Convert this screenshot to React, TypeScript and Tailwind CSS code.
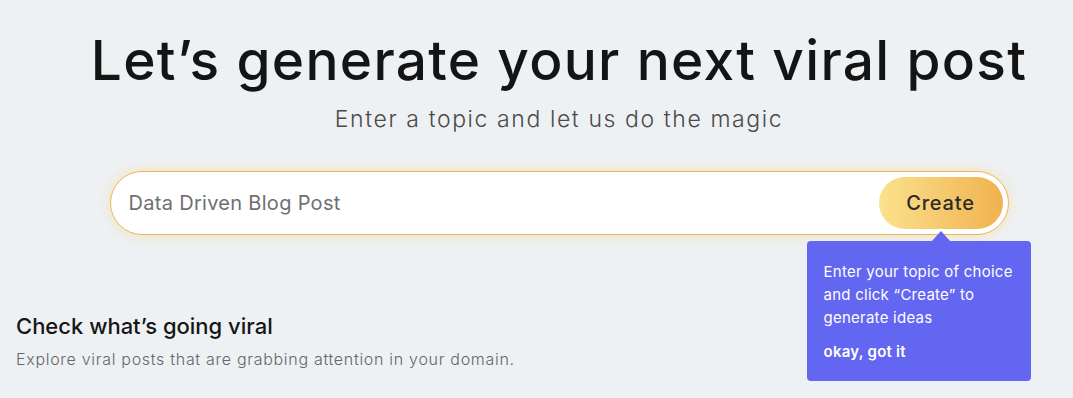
import React from 'react';

const font = { fontFamily: 'Inter, "Open Sans", sans-serif' };

function Tooltip() {
  return (
    <div className="absolute left-[697px] top-[70px] w-[224px] rounded-[4px] bg-[#6366f1] px-[17px] pt-[19px] pb-[18px] text-white">
      <div className="absolute -top-[10px] left-[124px] h-0 w-0 border-x-[10px] border-b-[11px] border-x-transparent border-b-[#6366f1]" />
      <p className="text-[15px] leading-[23px] tracking-[0.25px]">
        Enter your topic of choice and click “Create” to generate ideas
      </p>
      <button className="mt-[11px] text-[15px] font-semibold leading-[23px] tracking-[0.25px]">okay, got it</button>
    </div>
  );
}

export default function App() {
  return (
    <div className="h-[398px] w-[1073px] overflow-hidden bg-[#eef1f4]" style={font}>
      <div className="flex w-[1118px] flex-col items-center pt-[28px]">
        <h1 className="text-[55px] font-medium leading-[64px] tracking-[1.3px] text-[#141414]">
          Let’s generate your next viral post
        </h1>
        <p className="mt-[13px] text-[23px] font-light leading-[28px] tracking-[1.6px] text-[#4a4a4a]">
          Enter a topic and let us do the magic
        </p>
        <div className="relative mt-[38px] w-[899px]">
          <div className="flex h-[64px] items-center rounded-full border border-[#f0b653] bg-white pl-[18px] pr-[5px] shadow-[0_0_14px_rgba(250,204,80,0.35)]">
            <input
              className="flex-1 bg-transparent text-[20px] tracking-[0.3px] text-[#707070] outline-none placeholder:text-[#707070]"
              placeholder="Data Driven Blog Post"
            />
            <button className="h-[52px] w-[124px] rounded-full bg-gradient-to-r from-[#fbe18e] to-[#f0b24c] text-[20px] font-medium tracking-[0.8px] text-[#2b2b2b]">
              Create
            </button>
          </div>
          <Tooltip />
        </div>
      </div>
      <div className="mt-[77px] px-[16px]">
        <h2 className="text-[22px] font-medium leading-[28px] text-[#161616]">Check what’s going viral</h2>
        <p className="mt-[7px] text-[16px] font-light leading-[24px] tracking-[0.7px] text-[#666]">
          Explore viral posts that are grabbing attention in your domain.
        </p>
      </div>
    </div>
  );
}
